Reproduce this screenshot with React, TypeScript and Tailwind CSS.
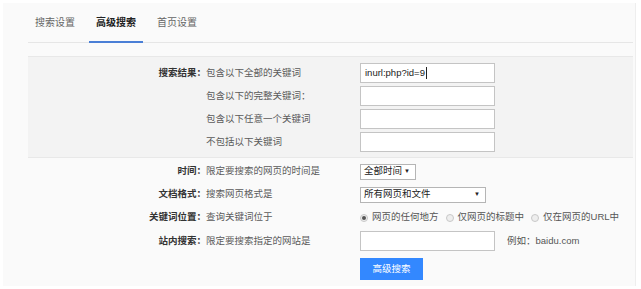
import React from 'react';

const font = { fontFamily: '"Liberation Sans", "Noto Sans CJK SC", sans-serif' };

const TextInput: React.FC<{ value?: string }> = ({ value }) => (
  <div className="w-[135px] h-[20px] bg-white border border-[#c4c4c4] flex items-center px-[4px] text-[9.5px] text-[#222]">
    {value}
    {value && <span className="w-px h-[12px] bg-[#222] ml-px" />}
  </div>
);

const Select: React.FC<{ label: string; width: string }> = ({ label, width }) => (
  <div className={`${width} h-[16px] bg-white border border-[#b5b5b5] flex items-center justify-between px-[3px] text-[9.5px] text-[#222]`}>
    <span>{label}</span>
    <span className="text-[6px] pr-[2px]">▼</span>
  </div>
);

const Radio: React.FC<{ checked?: boolean; label: string }> = ({ checked, label }) => (
  <div className="flex items-center gap-[4px] text-[9.5px] text-[#555]">
    <span className="w-[8px] h-[8px] rounded-full border border-[#c8c8c8] bg-[#eee] flex items-center justify-center">
      {checked && <span className="w-[4px] h-[4px] rounded-full bg-[#555]" />}
    </span>
    {label}
  </div>
);

const Row: React.FC<{ label?: string; desc: string; h: string; children: React.ReactNode }> = ({ label, desc, h, children }) => (
  <div className={`flex items-center ${h}`}>
    <div className="w-[178px] text-right font-semibold text-[#333] text-[9.5px]">{label}</div>
    <div className="w-[154px] text-[#5a5a5a] text-[9.5px]">{desc}</div>
    <div className="flex items-center">{children}</div>
  </div>
);

export default function App() {
  return (
    <div className="w-[641px] h-[289px] bg-white pl-[3px] pr-[5px] pt-[3px] pb-[3px]" style={font}>
      <div className="h-full bg-[#fafafa] pl-[25px] pr-[2px] border-r border-[#eee]">
        {/* tabs */}
        <div className="flex gap-[7px] border-b border-[#e6e6e6] h-[40px]">
          <div className="px-[7px] flex items-center text-[10px] text-[#666]">搜索设置</div>
          <div className="px-[7px] flex items-center text-[10px] text-[#222] font-semibold border-b-2 border-[#4a7fd6] -mb-px">高级搜索</div>
          <div className="px-[7px] flex items-center text-[10px] text-[#666]">首页设置</div>
        </div>

        {/* keyword box */}
        <div className="mt-[13px] bg-[#f3f3f3] border-t border-b border-[#e8e8e8] pt-[6px] pb-[5px] flex flex-col gap-[3px]">
          <Row label="搜索结果：" desc="包含以下全部的关键词" h="h-[20px]">
            <TextInput value="inurl:php?id=9" />
          </Row>
          <Row desc="包含以下的完整关键词：" h="h-[20px]">
            <TextInput />
          </Row>
          <Row desc="包含以下任意一个关键词" h="h-[20px]">
            <TextInput />
          </Row>
          <Row desc="不包括以下关键词" h="h-[20px]">
            <TextInput />
          </Row>
        </div>

        <div className="pt-[3px] flex flex-col gap-[2px]">
          <Row label="时间：" desc="限定要搜索的网页的时间是" h="h-[21px]">
            <Select label="全部时间" width="w-[56px]" />
          </Row>
          <Row label="文档格式：" desc="搜索网页格式是" h="h-[21px]">
            <Select label="所有网页和文件" width="w-[126px]" />
          </Row>
          <Row label="关键词位置：" desc="查询关键词位于" h="h-[21px]">
            <div className="flex items-center gap-[7px]">
              <Radio checked label="网页的任何地方" />
              <Radio label="仅网页的标题中" />
              <Radio label="仅在网页的URL中" />
            </div>
          </Row>
          <Row label="站内搜索：" desc="限定要搜索指定的网站是" h="h-[22px]">
            <TextInput />
            <span className="ml-[12px] text-[9.5px] text-[#555]">例如：baidu.com</span>
          </Row>
          <div className="flex mt-[4px]">
            <div className="w-[332px]" />
            <button className="w-[63px] h-[22px] bg-[#3388ff] text-white text-[9.5px]">高级搜索</button>
          </div>
        </div>
      </div>
    </div>
  );
}
